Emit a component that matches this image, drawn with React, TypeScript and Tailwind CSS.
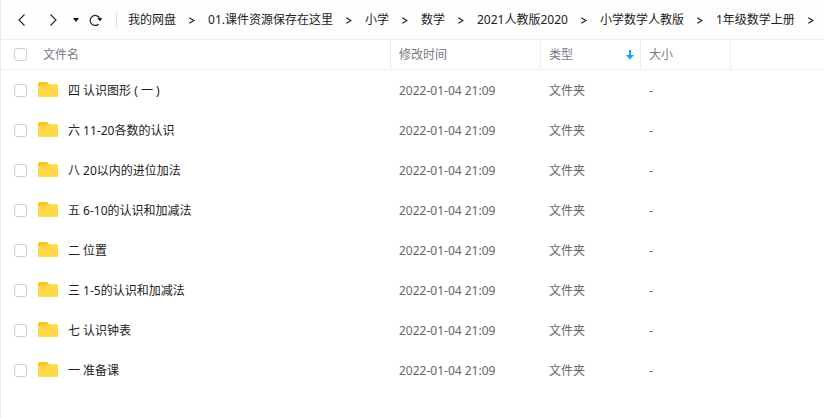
import React from "react";

interface Folder {
  name: string;
  modified: string;
  type: string;
  size: string;
}

const crumbs = [
  "我的网盘",
  "01.课件资源保存在这里",
  "小学",
  "数学",
  "2021人教版2020",
  "小学数学人教版",
  "1年级数学上册",
];

const folders: Folder[] = [
  "四 认识图形 ( 一 )",
  "六 11-20各数的认识",
  "八 20以内的进位加法",
  "五 6-10的认识和加减法",
  "二 位置",
  "三 1-5的认识和加减法",
  "七 认识钟表",
  "一 准备课",
].map((name) => ({ name, modified: "2022-01-04 21:09", type: "文件夹", size: "-" }));

function FolderIcon() {
  return (
    <svg width="20" height="16" viewBox="0 0 20 16" className="shrink-0" aria-hidden="true">
      <path d="M0 1.500C0 .6.6 0 1.500 0h6.300c.8 0 1.300.2 1.800.7L11.500 2.400V8H0z" fill="#ffc61f" />
      <path
        d="M0 4.600c0-.7.5-1.200 1.300-1.200h6.200c.7 0 1.200-.2 1.700-.6.5-.3 1-.5 1.600-.5h7.600c.9 0 1.600.6 1.600 1.500v9.800c0 .9-.6 1.500-1.500 1.500h-17C.6 15.100 0 14.500 0 13.600z"
        fill="#ffd747"
      />
    </svg>
  );
}

function Checkbox({ label }: { label: string }) {
  return (
    <input
      type="checkbox"
      aria-label={label}
      className="size-[13px] shrink-0 appearance-none rounded-[3px] border border-[#cfcfcf] bg-white checked:border-[#06a7ff] checked:bg-[#06a7ff]"
    />
  );
}

function Toolbar() {
  return (
    <header className="flex h-10 items-center overflow-hidden border-b border-[#ededed] bg-[#fefefe] text-[#222]">
      <button type="button" aria-label="后退" className="ml-[17px] shrink-0">
        <svg width="8" height="12" viewBox="0 0 8 12" fill="none" stroke="currentColor" strokeWidth="1.100">
          <path d="M6.500 .5 1 6 6.500 11.500" />
        </svg>
      </button>
      <button type="button" aria-label="前进" className="ml-6 shrink-0">
        <svg width="8" height="12" viewBox="0 0 8 12" fill="none" stroke="currentColor" strokeWidth="1.100">
          <path d="M.5 .5 6 6 .5 11.500" />
        </svg>
      </button>
      <button type="button" aria-label="历史记录" className="ml-[15px] shrink-0">
        <svg width="6" height="4" viewBox="0 0 6 4" fill="#111">
          <path d="M0 0h6L3 4z" />
        </svg>
      </button>
      <button type="button" aria-label="刷新" className="ml-[10px] shrink-0">
        <svg width="14" height="12" viewBox="0 0 14 12">
          <path d="M9.500 10.200A5 5 0 1 1 10.900 4.800" fill="none" stroke="#222" strokeWidth="1.200" />
          <path d="M8.300 4.200h5.200L11 7.200z" fill="#111" />
        </svg>
      </button>
      <span className="ml-[13px] h-4 w-px shrink-0 bg-[#e2e2e2]" />
      <nav aria-label="路径" className="ml-[11px] flex items-center whitespace-nowrap">
        {crumbs.map((crumb) => (
          <React.Fragment key={crumb}>
            <a href="#" className="shrink-0">{crumb}</a>
            <span className="flex w-8 shrink-0 justify-center pt-px" aria-hidden="true">
              <svg width="6" height="7" viewBox="0 0 6 7" fill="none" stroke="currentColor" strokeWidth="1.200">
                <path d="M.3 .8 5 3.500 .3 6.200" />
              </svg>
            </span>
          </React.Fragment>
        ))}
      </nav>
    </header>
  );
}

export default function App() {
  return (
    <main className="min-h-screen border-l border-[#ececec] bg-white font-['Noto_Sans','Noto_Sans_CJK_SC',sans-serif] text-[12px] leading-4">
      <Toolbar />
      <table className="w-full table-fixed border-separate border-spacing-0 text-left">
        <colgroup>
          <col className="w-[390px]" />
          <col className="w-[150px]" />
          <col className="w-[100px]" />
          <col className="w-[90px]" />
          <col />
        </colgroup>
        <thead className="text-[#757b85]">
          <tr className="h-[30px]">
            <th className="border-r border-b border-[#ededed] p-0 pl-[13px] font-normal">
              <div className="flex items-center gap-4">
                <Checkbox label="全选" />
                文件名
              </div>
            </th>
            <th className="border-r border-b border-[#ededed] p-0 pl-2 font-normal">修改时间</th>
            <th className="border-r border-b border-[#ededed] p-0 pl-2 font-normal">
              <button type="button" className="flex w-full items-center justify-between pr-[6px]">
                类型
                <svg width="8" height="10" viewBox="0 0 8 10" fill="#06a7ff" aria-hidden="true">
                  <path d="M3 0h2v5h3L4 9.500 0 5h3z" />
                </svg>
              </button>
            </th>
            <th className="border-r border-b border-[#ededed] p-0 pl-2 font-normal">大小</th>
            <th className="border-b border-[#ededed] p-0" />
          </tr>
        </thead>
        <tbody className="text-[#666]">
          {folders.map((folder) => (
            <tr key={folder.name} className="h-10">
              <td className="p-0 pl-[13px]">
                <div className="flex items-center text-[#222]">
                  <Checkbox label={folder.name} />
                  <span className="ml-[11px]"><FolderIcon /></span>
                  <span className="ml-[10px] truncate pt-0.5">{folder.name}</span>
                </div>
              </td>
              <td className="p-0 pt-0.5 pl-2">{folder.modified}</td>
              <td className="p-0 pt-0.5 pl-2">{folder.type}</td>
              <td className="p-0 pt-0.5 pl-2">{folder.size}</td>
              <td className="p-0" />
            </tr>
          ))}
        </tbody>
      </table>
    </main>
  );
}
